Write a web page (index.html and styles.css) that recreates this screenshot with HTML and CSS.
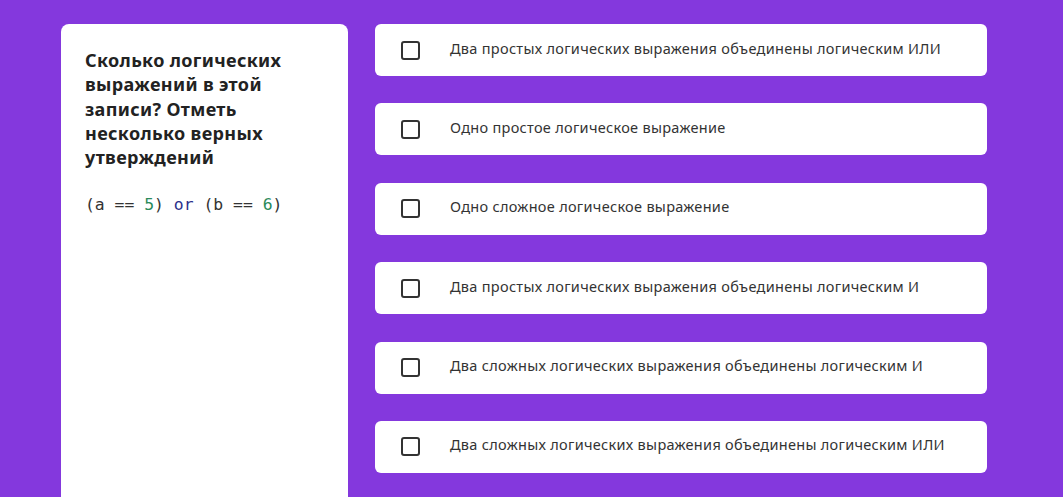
FILE: index.html
```html
<!DOCTYPE html>
<html lang="ru">
<head>
  <meta charset="UTF-8">
  <meta name="viewport" content="width=device-width, initial-scale=1.0">
  <title>Логические выражения</title>
  <link rel="stylesheet" href="styles.css">
</head>
<body>
  <div class="quiz">
    <div class="question">
      <h2>Сколько логических выражений в этой записи? Отметь несколько верных утверждений</h2>
      <pre class="code">(a == <span class="num">5</span>) <span class="kw">or</span> (b == <span class="num">6</span>)</pre>
    </div>

    <div class="answers">
      <label class="answer"><span class="box"></span><span class="text">Два простых логических выражения объединены логическим ИЛИ</span></label>
      <label class="answer"><span class="box"></span><span class="text">Одно простое логическое выражение</span></label>
      <label class="answer"><span class="box"></span><span class="text">Одно сложное логическое выражение</span></label>
      <label class="answer"><span class="box"></span><span class="text">Два простых логических выражения объединены логическим И</span></label>
      <label class="answer"><span class="box"></span><span class="text">Два сложных логических выражения объединены логическим И</span></label>
      <label class="answer"><span class="box"></span><span class="text">Два сложных логических выражения объединены логическим ИЛИ</span></label>
    </div>
  </div>
</body>
</html>
```

FILE: styles.css
```css
html, body {
  height: 100%;
}
body {
  margin: 0;
  background-color: #8438dd;
  font-family: "Noto Sans", "Open Sans", sans-serif;
  color: #333;
  overflow: hidden;
}
.quiz {
  display: flex;
  align-items: flex-start;
  gap: 27px;
  padding: 24px 0 0 61px;
}
.question {
  width: 287px;
  min-height: 520px;
  box-sizing: border-box;
  background-color: #fff;
  border-radius: 8px 8px 0 0;
  padding: 24px 24px;
}
.question h2 {
  margin: 0;
  font-size: 18px;
  line-height: 24.3px;
  font-weight: 700;
  letter-spacing: 0.35px;
  color: #222;
}
.code {
  margin: 24px 0 0;
  font-family: "DejaVu Sans Mono", monospace;
  font-size: 16.4px;
  line-height: 24px;
  color: #333;
}
.code .num {
  color: #2a8a5a;
}
.code .kw {
  color: #2b2f8a;
}
.answers {
  width: 612px;
  display: flex;
  flex-direction: column;
  gap: 27.4px;
}
.answer {
  display: flex;
  align-items: center;
  height: 52px;
  background-color: #fff;
  border-radius: 6px;
  padding-left: 26px;
  font-size: 14.5px;
  letter-spacing: 0.3px;
  color: #333;
  cursor: pointer;
}
.answer .text {
  margin-bottom: 5px;
}
.box {
  width: 19px;
  height: 19px;
  box-sizing: border-box;
  border: 2px solid #333;
  border-radius: 3px;
  margin-right: 30px;
  flex-shrink: 0;
}
```
